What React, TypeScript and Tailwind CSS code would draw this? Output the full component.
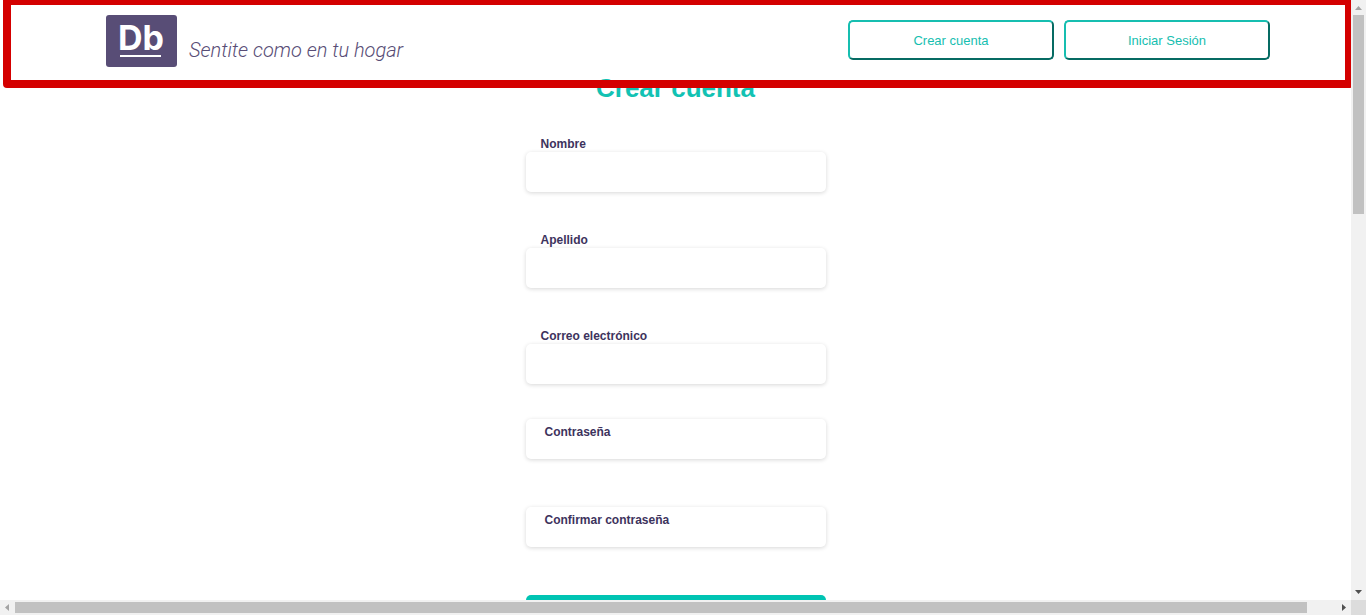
import React from "react";

type FieldProps = { id: string; label: string; type?: string };

const inputClass =
  "block h-10 w-full rounded-[5px] bg-white px-4 text-sm text-[#423b60] shadow-[0_1px_4px_rgba(0,0,0,0.16)] outline-none";
const labelClass = "text-xs leading-4 font-bold text-[#3d335d]";

function Field({ id, label, type = "text" }: FieldProps) {
  return (
    <div>
      <label htmlFor={id} className={`block pl-[15px] ${labelClass}`}>
        {label}
      </label>
      <input id={id} type={type} className={inputClass} />
    </div>
  );
}

function PasswordField({ id, label }: FieldProps) {
  return (
    <div className="relative">
      <label htmlFor={id} className={`absolute top-[5px] left-[19px] ${labelClass}`}>
        {label}
      </label>
      <input id={id} type="password" className={inputClass} />
    </div>
  );
}

function HeaderButton({ children }: { children: React.ReactNode }) {
  return (
    <button
      type="button"
      className="h-10 w-[206px] rounded-[5px] border-2 border-t-[#16beb0] border-r-[#066b63] border-b-[#066b63] border-l-[#16beb0] bg-white pt-px text-[13px] text-[#16beb0]"
    >
      {children}
    </button>
  );
}

function Arrow({ points, color }: { points: string; color: string }) {
  return (
    <svg width="15" height="15" viewBox="0 0 15 15" className="block shrink-0" aria-hidden="true">
      <polygon points={points} fill={color} />
    </svg>
  );
}

export default function App() {
  return (
    <div className="flex h-screen flex-col overflow-hidden bg-white font-['Liberation_Sans',Arial,sans-serif]">
      <div className="flex min-h-0 flex-1">
        <div className="relative min-w-0 flex-1 overflow-hidden">
          <header className="relative z-10 flex h-[79px] items-start justify-between bg-white pr-[81px] pl-[106px]">
            <a href="#" className="flex items-start gap-3 pt-[15px]">
              <span className="flex h-[52px] w-[71px] flex-col items-start rounded-[3px] bg-[#584d76] pl-3">
                <span className="h-10 font-[Inter,sans-serif] text-[34px] leading-[46px] font-bold text-white">
                  Db
                </span>
                <span className="ml-0.5 h-0.5 w-[41px] bg-white" />
              </span>
              <span className="pt-[22px] font-[Roboto,sans-serif] text-xl leading-[26px] font-light text-[#584d76] italic">
                Sentite como en tu hogar
              </span>
            </a>
            <nav className="flex gap-2.5 pt-5">
              <HeaderButton>Crear cuenta</HeaderButton>
              <HeaderButton>Iniciar Sesión</HeaderButton>
            </nav>
          </header>
          <div className="pointer-events-none absolute -top-[3px] -right-0.5 left-[3px] z-20 h-[91px] rounded-[4px] border-8 border-[#d40000]" />

          <main className="-mt-1.5 flex justify-center">
            <form className="w-[300px]">
              <h1 className="mb-[33px] text-center text-[26px] leading-[30px] font-bold text-[#12c2b3]">
                Crear cuenta
              </h1>
              <div className="flex flex-col gap-10">
                <Field id="nombre" label="Nombre" />
                <Field id="apellido" label="Apellido" />
                <Field id="correo" label="Correo electrónico" type="email" />
              </div>
              <div className="mt-[35px] flex flex-col gap-12">
                <PasswordField id="clave" label="Contraseña" />
                <PasswordField id="confirmar" label="Confirmar contraseña" />
                <button type="submit" aria-label="Crear cuenta" className="h-10 rounded-[5px] bg-[#00c4b3]" />
              </div>
            </form>
          </main>
        </div>

        <div className="flex w-[15px] shrink-0 flex-col items-center bg-[#f1f1f1]">
          <Arrow points="4,10 11,10 7.5,6" color="#a3a3a3" />
          <div className="h-[199px] w-[11px] bg-[#c1c1c1]" />
          <div className="flex-1" />
          <Arrow points="4,5 11,5 7.5,9" color="#505050" />
        </div>
      </div>
      <div className="flex h-[15px] shrink-0 items-center bg-[#f1f1f1]">
        <Arrow points="9,4 9,11 5,7.5" color="#a3a3a3" />
        <div className="flex h-[11px] flex-1">
          <div className="mr-[29px] flex-1 bg-[#c1c1c1]" />
        </div>
        <Arrow points="6,4 6,11 10,7.5" color="#505050" />
        <div className="size-[15px] bg-[#dcdcdc]" />
      </div>
    </div>
  );
}
